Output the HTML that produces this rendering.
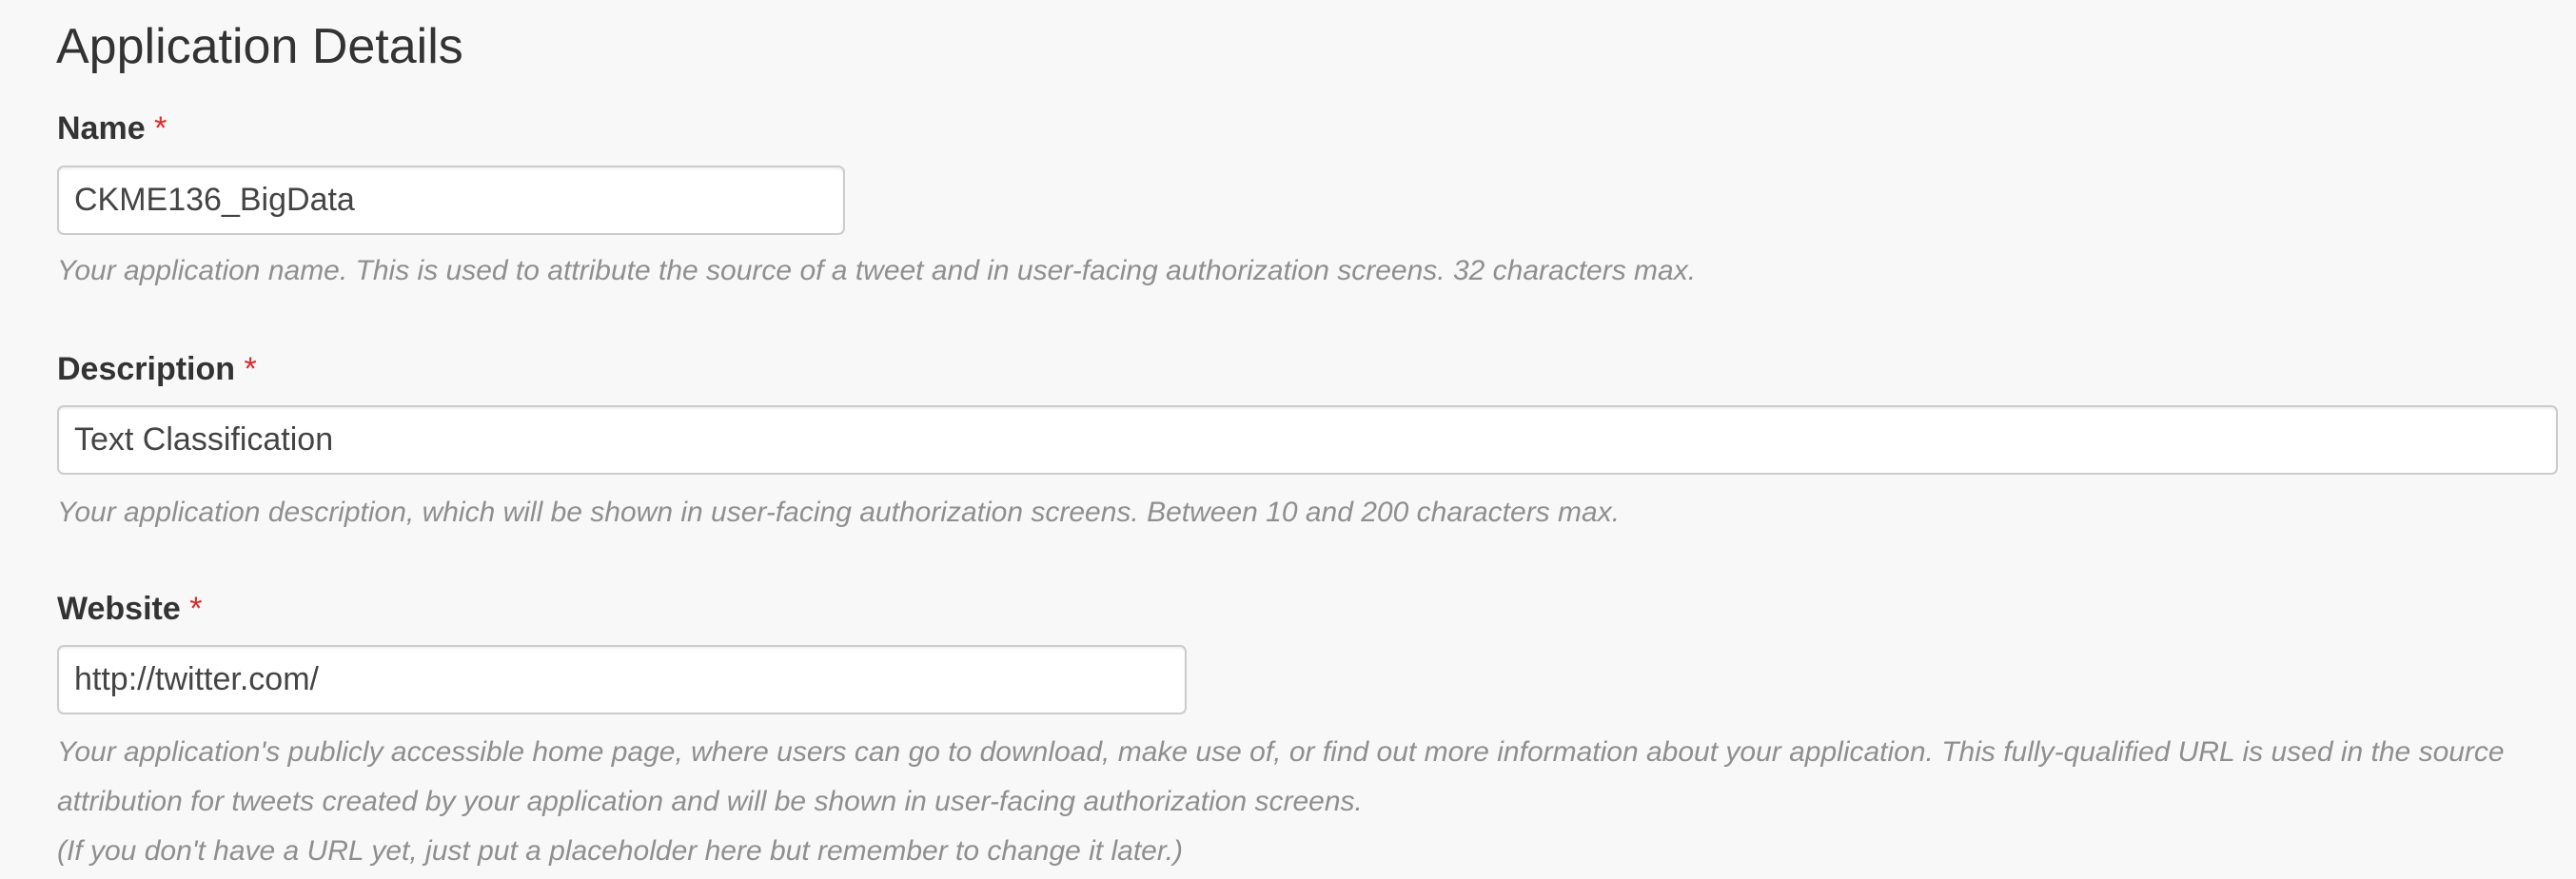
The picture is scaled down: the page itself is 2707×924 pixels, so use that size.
<!DOCTYPE html>
<html><head><meta charset="utf-8"><style>
html,body{margin:0;padding:0;background:#f8f8f8;width:2707px;height:924px;overflow:hidden;font-family:"Liberation Sans",Arial,sans-serif;}
h1{position:absolute;left:59px;top:14px;margin:0;font-weight:normal;font-size:52px;color:#333;line-height:70px;}
.lbl{position:absolute;left:60px;font-weight:bold;font-size:34px;color:#333;line-height:40px;}
.lbl span{color:#e0282b;font-weight:normal;}
.inp{position:absolute;left:60px;height:73px;box-sizing:border-box;border:2px solid #ccc;border-radius:7px;background:#fff;box-shadow:inset 0 2px 2px rgba(0,0,0,.06);font-size:34px;color:#444;padding-left:16px;line-height:68px;}
.help{position:absolute;left:60px;font-style:italic;font-size:30px;color:#8f8f8f;line-height:52px;white-space:nowrap;}
</style></head><body>
<h1>Application Details</h1>
<div class="lbl" style="top:115px">Name <span>*</span></div>
<div class="inp" style="top:174px;width:828px">CKME136_BigData</div>
<div class="help" style="top:259px">Your application name. This is used to attribute the source of a tweet and in user-facing authorization screens. 32 characters max.</div>
<div class="lbl" style="top:368px">Description <span>*</span></div>
<div class="inp" style="top:426px;width:2628px">Text Classification</div>
<div class="help" style="top:513px">Your application description, which will be shown in user-facing authorization screens. Between 10 and 200 characters max.</div>
<div class="lbl" style="top:620px">Website <span>*</span></div>
<div class="inp" style="top:678px;width:1187px">http://twitter.com/</div>
<div class="help" style="top:765px">Your application's publicly accessible home page, where users can go to download, make use of, or find out more information about your application. This fully-qualified URL is used in the source<br>attribution for tweets created by your application and will be shown in user-facing authorization screens.<br>(If you don't have a URL yet, just put a placeholder here but remember to change it later.)</div>
</body></html>
